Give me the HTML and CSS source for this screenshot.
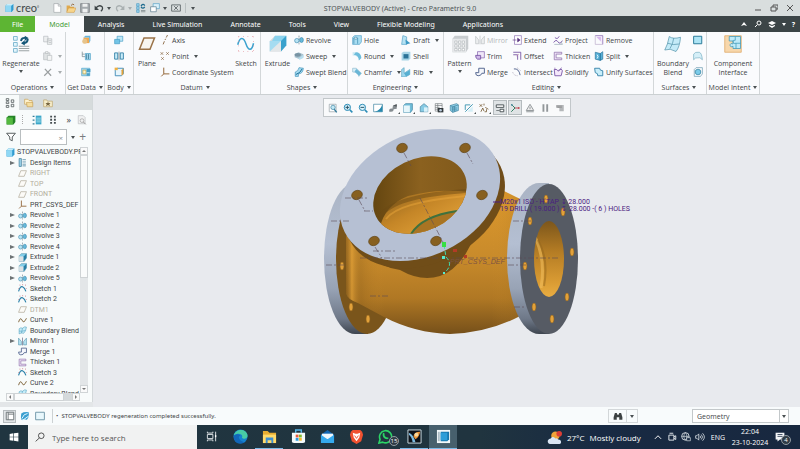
FILE: index.html
```html
<!DOCTYPE html>
<html lang="en">
<head>
  <meta charset="UTF-8">
  <title>STOPVALVEBODY (Active) - Creo Parametric 9.0</title>
  <link rel="stylesheet" href="styles.css">
</head>
<body>
  <!-- icon set -->
  <svg class="sprite" aria-hidden="true">
    <symbol id="cube" viewBox="0 0 16 16"><path d="M1 4l3-3h11v10l-3 4H1z" fill="#2f9bd0"/><path d="M1 4h10v11H1z" fill="#8fd8f5"/><path d="M4 1h11l-4 3H1z" fill="#c9eefb"/></symbol>
    <symbol id="new" viewBox="0 0 16 16"><path d="M3 1h7l4 4v10H3z" fill="#fff" stroke="#9a9fa2"/><path d="M10 1v4h4" fill="none" stroke="#9a9fa2"/></symbol>
    <symbol id="open" viewBox="0 0 16 16"><path d="M1 14V4h5l1 2h6v8z" fill="#e0a94e"/><path d="M1 15l3-7h12l-3 7z" fill="#f7d58c" stroke="#c68b35" stroke-width=".7"/><path d="M8 4q3-4 5-1" fill="none" stroke="#8a5a2b" stroke-width="1.4"/></symbol>
    <symbol id="save" viewBox="0 0 16 16"><path d="M1 1h14v14H1z" fill="#a5abae" stroke="#6b7073"/><path d="M4 1h8v5H4zM4 9h8v6H4z" fill="#eef0f0"/></symbol>
    <symbol id="undo" viewBox="0 0 16 16"><path d="M3 8q5-6 10-2 2 4-2 7" fill="none" stroke="#3d4446" stroke-width="2"/><path d="M1 4v7h7z" fill="#3d4446"/></symbol>
    <symbol id="redo" viewBox="0 0 16 16"><path d="M13 8Q8 2 3 6q-2 4 2 7" fill="none" stroke="#a9b0b1" stroke-width="2"/><path d="M15 4v7H8z" fill="#a9b0b1"/></symbol>
    <symbol id="regenlist" viewBox="0 0 16 16"><path d="M1 1h4v4H1zM1 6h4v4H1zM1 11h4v4H1z" fill="#9bd3ec" stroke="#4b9cc3"/><path d="M8 12h7M8 14h7" stroke="#697376"/><path d="M8 5q3-5 6-1M14 6q-3 4-6 0" fill="none" stroke="#1f6b8e" stroke-width="2"/></symbol>
    <symbol id="windows" viewBox="0 0 16 16"><path d="M5 1h10v8H5z" fill="#d9f0fa" stroke="#4b9cc3"/><path d="M1 6h9v8H1z" fill="#fff" stroke="#4b6f82"/></symbol>
    <symbol id="close-win" viewBox="0 0 16 16"><path d="M1 3h14v10H1zM5 5l6 6M11 5l-6 6" fill="none" stroke="#5d6567" stroke-width="1.4"/></symbol>
    <symbol id="regen" viewBox="0 0 24 24"><path d="M2 2h5v5H2zM2 10h5v5H2zM2 18h5v5H2z" fill="#e4f5fc" stroke="#62a7c6"/><path d="M9 18h14M9 21h14M9 15h14" stroke="#8f989a" stroke-width="1.2"/><path d="M12 8q1-5 6-4M21 5q0 5-5 6" fill="none" stroke="#155777" stroke-width="2.6"/><path d="M17 1l5 3-5 4zM17 7l-5 4 5 3z" fill="#155777"/></symbol>
    <symbol id="copy" viewBox="0 0 16 16"><path d="M1 2h7v9H1zM7 6h7v9H7z" fill="#eceeef" stroke="#b4b9bb"/><path d="M9 9h4M9 12h4" stroke="#b4b9bb"/></symbol>
    <symbol id="paste" viewBox="0 0 16 16"><path d="M1 3h10v11H1z" fill="#dfe2e3" stroke="#b4b9bb"/><path d="M4 1h4v3H4zM7 7h7v8H7z" fill="#f4f5f5" stroke="#b4b9bb"/></symbol>
    <symbol id="delete" viewBox="0 0 16 16"><path d="M3 3l10 11M13 3L2 14" stroke="#9b9fa1" stroke-width="2"/></symbol>
    <symbol id="udf" viewBox="0 0 16 16"><path d="M4 4h9v9H4z" fill="#f0a850"/><path d="M4 4l3-3h8v8l-2 4V4z" fill="#6bb6dc"/><circle cx="6" cy="10" r="4" fill="#e7c48b"/></symbol>
    <symbol id="copygeom" viewBox="0 0 16 16"><path d="M2 1v8h5M2 5h4" fill="none" stroke="#64757c"/><path d="M7 4h8v10H7z" fill="#a8dcf2" stroke="#3c97c0"/><path d="M9 5v8M12 5v8" stroke="#235c79"/></symbol>
    <symbol id="merge-in" viewBox="0 0 16 16"><path d="M1 2h13v12H1z" fill="#a4daf0" stroke="#4ba0c6"/><path d="M3 5h5v6H3z" fill="#fff3c5" stroke="#b99b40"/><path d="M9 3h6v5H9zM9 10h5v4H9z" fill="#4ba0c6"/></symbol>
    <symbol id="body-bool" viewBox="0 0 16 16"><path d="M5 2h9v8H5z" fill="#bde7f7" stroke="#3c97c0"/><path d="M1 7h8v7H1z" fill="#73c4e6" stroke="#3c97c0"/></symbol>
    <symbol id="body-split" viewBox="0 0 16 16"><path d="M1 3h5v10H1zM10 3h5v10h-5z" fill="#c8ecf9" stroke="#2e7ea5" stroke-width="1.4"/><path d="M8 1v14" stroke="#64757c"/></symbol>
    <symbol id="body-new" viewBox="0 0 16 16"><path d="M2 5l3-3h10v9l-3 3H2z" fill="#e8f5fb" stroke="#3786b4" stroke-width="1.4"/><path d="M12 5v9l3-3V2z" fill="#e2a23a"/><path d="M1 1h5v4H1z" fill="#f0b040"/></symbol>
    <symbol id="plane" viewBox="0 0 24 24"><path d="M8 4h14l-6 15H2z" fill="#f8f6f1" stroke="#9a7349" stroke-width="2"/></symbol>
    <symbol id="axis" viewBox="0 0 16 16"><path d="M5 15l2-5M8 8l1-2M10 4l2-4" stroke="#8b6a45" stroke-width="1.5"/></symbol>
    <symbol id="point" viewBox="0 0 16 16"><path d="M1 2l4 4M5 2L1 6M10 2l4 4M14 2l-4 4M2 10l4 4M6 10l-4 4" stroke="#8b6a45" stroke-width="1.2"/></symbol>
    <symbol id="csys" viewBox="0 0 16 16"><path d="M6 1v10h9M6 11l-4 4" fill="none" stroke="#94683b" stroke-width="1.6"/></symbol>
    <symbol id="sketch" viewBox="0 0 24 24"><path d="M1 13C4 1 9 3 12 12s8 10 10-1" fill="none" stroke="#3ba2cf" stroke-width="2"/><path d="M2 2h20M2 22h20M2 2v20M22 2v20" fill="none" stroke="#e08d95" stroke-dasharray="1 5"/></symbol>
    <symbol id="extrude" viewBox="0 0 24 24"><path d="M1 8l7-7h15v13l-7 8H1z" fill="#d5dadd"/><path d="M8 1h15v13l-7-5V8H4z" fill="#8bd3ee"/><path d="M16 8l7-7v13l-7 8z" fill="#3aa2cd"/><path d="M1 8h15v14H1z" fill="#e3e7e9"/><path d="M1 8h15L1 22z" fill="#a5dcf1"/></symbol>
    <symbol id="revolve" viewBox="0 0 16 16"><path d="M8 1v14" stroke="#59707b" stroke-dasharray="3 1"/><ellipse cx="4.500" cy="9" rx="3.500" ry="3.500" fill="#b8e3f3" stroke="#3687ad"/><ellipse cx="12" cy="8" rx="3" ry="4" fill="#67b9da" stroke="#3687ad"/></symbol>
    <symbol id="sweep" viewBox="0 0 16 16"><path d="M1 5l6-3 8 3v5l-6 3-8-3z" fill="#a9c3d0"/><ellipse cx="6" cy="6" rx="5" ry="3" fill="#7893a3"/><path d="M7 12l8-6v5l-6 3z" fill="#b7dfef"/></symbol>
    <symbol id="swept" viewBox="0 0 16 16"><path d="M2 15V8q5-1 6-7l7 1q-1 9-8 9v4z" fill="#a6dcf2" stroke="#358bb3"/><path d="M3 12q7-2 10-9" fill="none" stroke="#1d6f98" stroke-width="1.600"/></symbol>
    <symbol id="hole" viewBox="0 0 16 16"><path d="M1 4l3-3h11v10l-3 4H1z" fill="#a9ddf1" stroke="#4b9cc3"/><ellipse cx="6" cy="5" rx="3" ry="1.500" fill="#fff" stroke="#2e7ea5"/><path d="M3 5v9M9 5v9" stroke="#2e7ea5"/></symbol>
    <symbol id="round" viewBox="0 0 16 16"><path d="M1 2h6q7 1 8 8l-4 5q0-8-10-8z" fill="#c9e9f4"/><path d="M6 2q8 0 9 9l-4 4q0-8-8-9z" fill="#6dbcdb"/></symbol>
    <symbol id="chamfer" viewBox="0 0 16 16"><path d="M1 2h6l8 8-4 5q-1-7-10-7z" fill="#d5eef8" stroke="#8bb9cc"/><path d="M7 3l8 7-4 4-7-7z" fill="#6ab6d6"/></symbol>
    <symbol id="draft" viewBox="0 0 16 16"><path d="M3 1l6 2v12H1z" fill="#b6e2f3" stroke="#4b9cc3"/><path d="M7 7l8 6-7 2z" fill="#3d99c4"/></symbol>
    <symbol id="shell" viewBox="0 0 16 16"><path d="M1 3l3-2h11v11l-3 3H1z" fill="#a8d5e6"/><path d="M4 5h8v7H4z" fill="#2a7398"/></symbol>
    <symbol id="rib" viewBox="0 0 16 16"><path d="M1 4l4-3v9l9-6v8l-7 4H1z" fill="#9fd7ed" stroke="#559fbc"/><path d="M5 10l9-5v7l-6 3z" fill="#56afd2"/></symbol>
    <symbol id="pattern" viewBox="0 0 24 24"><path d="M2 5l3-4h18v17l-3 5H2z" fill="#c8cccf"/><path d="M2 5h18v18H2z" fill="#e6e8ea"/><path d="M5 8h3v3H5zM10 8h3v3h-3zM15 8h3v3h-3zM5 13h3v3H5zM10 13h3v3h-3zM15 13h3v3h-3zM5 18h3v3H5zM10 18h3v3h-3zM15 18h3v3h-3z" fill="#fff" stroke="#a5abae" stroke-width=".7"/></symbol>
    <symbol id="mirror-off" viewBox="0 0 16 16"><path d="M1 2v12h5V8zM15 2v12h-5V8zM8 1v14" fill="#eceeef" stroke="#b9bdbf"/></symbol>
    <symbol id="trim" viewBox="0 0 16 16"><path d="M4 1h11v10H4z" fill="#efe6f8" stroke="#7652a3"/><path d="M1 7h8v6H4q-3-1-3-6z" fill="#cfb8e8" stroke="#7652a3" stroke-width="1.400"/></symbol>
    <symbol id="merge" viewBox="0 0 16 16"><path d="M6 2h9v8h-4q-1 4-6 4-4 0-4-5h5z" fill="#f4f6fb" stroke="#50628d" stroke-width="1.500"/></symbol>
    <symbol id="extend" viewBox="0 0 16 16"><path d="M4 1h11v14H4z" fill="#fff" stroke="#8767ae"/><path d="M1 8h6M9 5v6l4-3z" fill="#58337f" stroke="#58337f"/></symbol>
    <symbol id="offset" viewBox="0 0 16 16"><path d="M2 2h12v12M2 6h7v8" fill="none" stroke="#7652a3" stroke-width="1.400"/><path d="M11 5l-4 3" stroke="#c58aa0"/></symbol>
    <symbol id="intersect" viewBox="0 0 16 16"><path d="M3 3q8-1 10 10" fill="none" stroke="#50628d" stroke-width="1.500"/><path d="M1 8q2 6 8 6M8 1l6 5" fill="none" stroke="#a7a0b4" stroke-dasharray="2 1"/></symbol>
    <symbol id="project" viewBox="0 0 16 16"><path d="M3 4q4 4 7-2M1 12q4-6 7-1t7-2" fill="none" stroke="#7652a3" stroke-width="1.400"/><path d="M2 15h13l-2-4" fill="none" stroke="#8ba0ad"/></symbol>
    <symbol id="thicken" viewBox="0 0 16 16"><path d="M2 2h12v3H5v6h9v3H2z" fill="#eee3f6" stroke="#7e5d9e"/></symbol>
    <symbol id="solidify" viewBox="0 0 16 16"><path d="M2 4h4q2 5 7-1l2 3-2 8H3z" fill="#f5e9fb" stroke="#7652a3" stroke-width="1.400"/><path d="M8 6l6-5M3 1v3" stroke="#7652a3"/></symbol>
    <symbol id="remove" viewBox="0 0 16 16"><path d="M2 1h12v14" fill="#f4ecfa" stroke="#7652a3"/><path d="M4 3h7v7z" fill="#d6b5ed"/><path d="M2 1v14h12" fill="none" stroke="#b6a5c5"/></symbol>
    <symbol id="split" viewBox="0 0 16 16"><path d="M2 2l8 2v11l-8-2zM10 4l4-3v12l-4 2z" fill="#57b0d7" stroke="#236f97"/><path d="M5 6q3 3 0 6" fill="none" stroke="#eafaff" stroke-width="1.500"/></symbol>
    <symbol id="unify" viewBox="0 0 16 16"><path d="M1 2h8q0 4 5 4v8H6q1-4-4-5z" fill="#c9eefa" stroke="#2e7ea5" stroke-width="1.400"/></symbol>
    <symbol id="boundary" viewBox="0 0 24 24"><path d="M7 2q5 4 15 1-1 13-6 19Q8 17 1 20 5 13 7 2z" fill="#c4ebf8" stroke="#5897ae"/><path d="M13 4q-1 8-5 14M5 11q7 3 15 1" fill="none" stroke="#5897ae"/></symbol>
    <symbol id="fill" viewBox="0 0 16 16"><path d="M1 2h13v12H1z" fill="#ade4f5" stroke="#237594" stroke-width="1.500"/></symbol>
    <symbol id="style" viewBox="0 0 16 16"><path d="M1 14V5q2-4 9-3 4 1 5 12-4-5-8-3-3-1-6 3z" fill="#d5eff8" stroke="#6ba6bb"/></symbol>
    <symbol id="freestyle" viewBox="0 0 16 16"><path d="M2 4l3-3h10v10l-3 4H2z" fill="none" stroke="#5b91a7"/><circle cx="8" cy="8" r="4.500" fill="#7bcbe9" stroke="#237594"/></symbol>
    <symbol id="component" viewBox="0 0 24 24"><path d="M1 1h22v22H1z" fill="#f7d7ac" stroke="#dda662"/><path d="M7 2h15v16H12v-3q-4 2-4-2 1-3 4-1V8H7z" fill="#bfeaf8" stroke="#3e98b8"/><path d="M15 2v5q-4-1-3 3 1 2 4 1v7M16 11h6" fill="none" stroke="#3e98b8"/></symbol>
    <symbol id="treetab" viewBox="0 0 16 16"><path d="M2 1h4v3H2zM2 6h4v3H2zM2 12h4v3H2zM10 3h4v4h-4zM10 10h4v4h-4z" fill="none" stroke="#555c5e" stroke-width="1.300"/></symbol>
    <symbol id="folders" viewBox="0 0 16 16"><path d="M1 2h5l2 2h5v6H1z" fill="#fff4cf" stroke="#c59a4c"/><path d="M4 7h10v7H5z" fill="#f4dd9f" stroke="#c59a4c"/></symbol>
    <symbol id="favorite" viewBox="0 0 16 16"><path d="M1 3h5l1 2h8v9H1z" fill="#f6ecc8" stroke="#ba9f63"/><path d="M8 6l1 2h3l-2 2 1 3-3-2-3 2 1-3-2-2h3z" fill="#776540"/></symbol>
    <symbol id="greencube" viewBox="0 0 16 16"><path d="M1 4l3-3h11v10l-3 4H1z" fill="#238326"/><path d="M1 4h10v11H1z" fill="#54b93f"/></symbol>
    <symbol id="listset" viewBox="0 0 16 16"><path d="M1 2h3M1 8h3M1 14h3" stroke="#347c96" stroke-width="2"/><path d="M6 1h9v14H6z" fill="#3aa6c8"/><path d="M7 5h7M7 8h7M7 11h7" stroke="#dff"/></symbol>
    <symbol id="listdots" viewBox="0 0 16 16"><path d="M5 1v14M11 1v14" stroke="#454d50" stroke-width="3" stroke-dasharray="3 2"/></symbol>
    <symbol id="findpage" viewBox="0 0 16 16"><path d="M2 1h8l3 3v10H2z" fill="#f0f1f1" stroke="#b5b9bb"/><circle cx="8" cy="9" r="3" fill="none" stroke="#999"/><path d="M10 11l4 4" stroke="#999" stroke-width="1.500"/></symbol>
    <symbol id="filter" viewBox="0 0 16 16"><path d="M1 2h14l-5 6v6l-4-2V8z" fill="#fff" stroke="#4e5557" stroke-width="1.500"/></symbol>
    <symbol id="items" viewBox="0 0 16 16"><path d="M2 1h4v14H2zM8 3h6M8 7h6M8 11h6M8 14h6" fill="#9fd5ec" stroke="#407e99" stroke-width="1.300"/></symbol>
    <symbol id="datum" viewBox="0 0 16 16"><path d="M5 3h10l-4 10H1z" fill="#fcfbf7" stroke="#bdb7a8" stroke-width="1.500"/></symbol>
    <symbol id="extr" viewBox="0 0 16 16"><path d="M2 5l4-4h9v8l-4 6H2z" fill="#82cee9" stroke="#6d9dae"/><path d="M2 6h8v9H2z" fill="#dce2e5"/><path d="M10 6l5-5v8l-5 6z" fill="#277da4"/></symbol>
    <symbol id="sk" viewBox="0 0 16 16"><path d="M1 13Q4 3 8 5t6 8" fill="none" stroke="#287fa8" stroke-width="2"/><path d="M3 2h1M8 1h1M13 2h1M1 8h1M14 8h1" stroke="#c26972" stroke-width="2"/></symbol>
    <symbol id="curve" viewBox="0 0 16 16"><path d="M1 11Q4 1 7 7q3 8 8-3" fill="none" stroke="#80663d" stroke-width="1.700"/></symbol>
    <symbol id="bblend" viewBox="0 0 16 16"><path d="M2 5q3-3 6-1 4-4 7-2-1 8-5 11-4-2-8 1z" fill="#c7edf9" stroke="#4d9dbd"/><path d="M8 4L6 13M2 9q5 1 11-1" fill="none" stroke="#4d9dbd"/></symbol>
    <symbol id="mirror" viewBox="0 0 16 16"><path d="M1 2v12h5V8zM15 2v12h-5V8z" fill="#b7e2f2" stroke="#4b8ea9"/><path d="M8 1v14" stroke="#446"/></symbol>
    <symbol id="zoomfit" viewBox="0 0 16 16"><path d="M2 2h11v12H2z" fill="#fff" stroke="#8a979d"/><circle cx="8" cy="7" r="3.500" fill="#c2e8f5" stroke="#2d7899"/><path d="M10 10l4 5" stroke="#2d7899" stroke-width="2"/></symbol>
    <symbol id="zoomin" viewBox="0 0 16 16"><circle cx="7" cy="7" r="5" fill="#d8f2fb" stroke="#2d8db7" stroke-width="1.600"/><path d="M4 7h6M7 4v6" stroke="#214d63" stroke-width="1.500"/><path d="M11 11l4 4" stroke="#2d8db7" stroke-width="2.400"/></symbol>
    <symbol id="zoomout" viewBox="0 0 16 16"><circle cx="7" cy="7" r="5" fill="#d8f2fb" stroke="#2d8db7" stroke-width="1.600"/><path d="M4 7h6" stroke="#214d63" stroke-width="1.500"/><path d="M11 11l4 4" stroke="#2d8db7" stroke-width="2.400"/></symbol>
    <symbol id="repaint" viewBox="0 0 16 16"><path d="M1 2h14v12H1z" fill="#fff" stroke="#277696"/><path d="M15 2v12H3q9-2 12-12z" fill="#2788ad"/></symbol>
    <symbol id="render" viewBox="0 0 16 16"><path d="M2 14q-1-6 5-5l1-5 6-2v7l-5 1q0 4-4 4z" fill="#858c90"/><path d="M8 4l6-2v4z" fill="#53595c"/></symbol>
    <symbol id="display" viewBox="0 0 16 16"><path d="M1 4l3-3h11v10l-3 4H1z" fill="#71bed9" stroke="#2d7899"/><path d="M1 4h10v11H1z" fill="#e6f6fb"/></symbol>
    <symbol id="views" viewBox="0 0 16 16"><path d="M2 6l6-5 6 5v8H2z" fill="#88cbe4" stroke="#397c99"/><path d="M8 7h6v7H8z" fill="#d9f2fa"/></symbol>
    <symbol id="viewmgr" viewBox="0 0 16 16"><path d="M2 1h11v12H2zM2 4h11M2 7h7M2 10h6M6 1v12" fill="none" stroke="#707779"/><path d="M6 8h9v7H6z" fill="#333a3d"/><circle cx="10.500" cy="11.500" r="2" fill="#bcd"/></symbol>
    <symbol id="persp" viewBox="0 0 16 16"><path d="M2 4l10-3 3 2v9l-9 3-4-3z" fill="#8fcfe8" stroke="#377b98"/><path d="M2 4l4 2v9M6 6l9-3M4 8h9M4 11h9M9 5v9" fill="none" stroke="#377b98"/></symbol>
    <symbol id="section" viewBox="0 0 16 16"><path d="M2 14L14 2M2 3h8M2 3v8" fill="none" stroke="#3f97b3" stroke-width="1.500"/><path d="M14 5v9H5z" fill="#d4eef6"/></symbol>
    <symbol id="datums" viewBox="0 0 16 16"><path d="M1 2l4 4M5 2L1 6M8 1v3M3 14l3-6 2 5M10 7l5 3M9 14h3v-4" fill="none" stroke="#7d633e" stroke-width="1.400"/></symbol>
    <symbol id="notes" viewBox="0 0 16 16"><path d="M2 3h12v4H2zM8 10h6v4H8z" fill="#fff" stroke="#3e4749" stroke-width="1.400"/><path d="M2 12h5" stroke="#3e4749"/></symbol>
    <symbol id="spin" viewBox="0 0 16 16"><path d="M2 2l6 6-6 6" fill="none" stroke="#337d61" stroke-width="1.600"/><path d="M8 8h6" stroke="#c24a54" stroke-width="1.500"/><circle cx="3" cy="3" r="1.500" fill="#4d8c9f"/><circle cx="14" cy="8" r="1.500" fill="#c24a54"/></symbol>
    <symbol id="warn" viewBox="0 0 16 16"><path d="M8 2l6 10H2z" fill="#eee" stroke="#8f9497" stroke-width="1.500"/><path d="M8 6v4M2 14h12" stroke="#8f9497" stroke-width="1.500"/></symbol>
    <symbol id="pause" viewBox="0 0 16 16"><path d="M4 2h3v12H4zM10 2h3v12h-3z" fill="#92979a"/></symbol>
    <symbol id="stop" viewBox="0 0 16 16"><path d="M2 3h12v10H7V8H2z" fill="#b4b7b9"/><path d="M2 5h9M4 7h7" stroke="#888"/></symbol>
    <symbol id="panel" viewBox="0 0 16 16"><path d="M2 2h12v12H2zM5 2v12M5 5h9" fill="#fff" stroke="#626b6f" stroke-width="1.400"/></symbol>
    <symbol id="browser" viewBox="0 0 16 16"><path d="M2 4q4-3 12-2 1 8-3 12-5-2-9 0-1-5 0-10z" fill="#3b9fd0"/><path d="M3 12Q6 4 12 4M4 15l10-7" fill="none" stroke="#dff5ff" stroke-width="1.600"/></symbol>
    <symbol id="square" viewBox="0 0 16 16"><path d="M1 2h14v12H1z" fill="#e8f7fc" stroke="#6e95a8" stroke-width="1.500"/></symbol>
    <symbol id="binoc" viewBox="0 0 16 16"><path d="M3 3h3l1 3h2l1-3h3l2 7v4h-5v-4H6v4H1v-4z" fill="#3c4142"/></symbol>
    <symbol id="win" viewBox="0 0 16 16"><path d="M1 3l6-1v5.500H1zM8 2l7-1v6.500H8zM1 8.500h6V14l-6-1zM8 8.500h7V15l-7-1z" fill="#fff"/></symbol>
    <symbol id="search" viewBox="0 0 16 16"><circle cx="10" cy="6" r="4.500" fill="none" stroke="#333" stroke-width="1.300"/><path d="M7 9.500L1 15" stroke="#333" stroke-width="1.300"/></symbol>
    <symbol id="taskview" viewBox="0 0 16 16"><path d="M2 5h8v6H2zM2 1v2h8V1M2 15v-2h8v2M14 1v14" fill="none" stroke="#e8edef" stroke-width="1.300"/><path d="M13 6h2v3h-2z" fill="#fff"/></symbol>
    <symbol id="edge" viewBox="0 0 16 16"><circle cx="8" cy="8" r="7.500" fill="#1682cf"/><path d="M1 7C2-1 15-1 15.500 7c0 4-5 4-6 2 2-3-4-6-8.500-2z" fill="#48cba5"/><path d="M1 7q4-3 7 0-3 1-1 4t6 3Q3 18 1 10z" fill="#1266b8"/></symbol>
    <symbol id="explorer" viewBox="0 0 16 16"><path d="M1 2h5l2 2h7v11H1z" fill="#e8ad32"/><path d="M1 6h14v9H1z" fill="#ffda6b"/><path d="M4 9h8v6h-2v-3H6v3H4z" fill="#3e8fd2"/></symbol>
    <symbol id="store" viewBox="0 0 16 16"><path d="M5 4V1h6v3" fill="none" stroke="#58b7e9" stroke-width="1.500"/><path d="M1 4h14v10l-2 1H3l-2-1z" fill="#f5fafc"/><path d="M5 6h3v3H5z" fill="#ef5b3a"/><path d="M8.500 6h3v3h-3z" fill="#80bb2f"/><path d="M5 9.500h3v3H5z" fill="#2b9be0"/><path d="M8.500 9.500h3v3h-3z" fill="#f8bb30"/></symbol>
    <symbol id="mail" viewBox="0 0 16 16"><path d="M1 6l7-5 7 5v8H1z" fill="#1267b3"/><path d="M2 5h12v6H2z" fill="#eef7fd"/><path d="M1 6l7 5 7-5v9H1z" fill="#35a9ed"/></symbol>
    <symbol id="brave" viewBox="0 0 16 16"><path d="M4 1h8l2 2 1 3-2 7-5 3-5-3-2-7 1-3z" fill="#f05130"/><path d="M4 4l3 1h2l3-1-1 5-3 4-3-4z" fill="#fff"/><path d="M6 7l2 3 2-3" fill="none" stroke="#f05130"/></symbol>
    <symbol id="whatsapp" viewBox="0 0 16 16"><path d="M1 15l1.200-4A6.500 6.500 0 1 1 5 14z" fill="none" stroke="#2bd366" stroke-width="1.700"/><path d="M5 5q1-2 2 0l0 2q1 2 3 2l1 0q1 1-1 2-4 0-5-4z" fill="#2bd366"/></symbol>
    <symbol id="creo-app" viewBox="0 0 16 16"><path d="M1 1h14v14H1z" fill="#0d1219" stroke="#cfe0e6"/><path d="M2 4q5 2 7 10H6Q5 8 2 6z" fill="#7dbbe0"/><path d="M7 8q0-5 7-5-1 6-5 8z" fill="#ef963a"/><circle cx="10" cy="6" r="2" fill="#f6d9a0"/></symbol>
    <symbol id="creo-part" viewBox="0 0 16 16"><path d="M1 1h14v14H1z" fill="#f3f8fa"/><path d="M5 3h9v8l-2 2H5z" fill="#1778af"/><path d="M5 4h7v8H5z" fill="#2c9dd8"/><path d="M2 3h2v10H2z" fill="#aebec6"/></symbol>
    <symbol id="weather" viewBox="0 0 16 16"><circle cx="9" cy="6" r="4.500" fill="#f2a338"/><path d="M3 15q-3-1-2-4 1-2 3-2 2-3 5 0 1-1 3 1 3 0 3 3 0 2-3 2z" fill="#d9e5f3"/><circle cx="13" cy="4" r="3" fill="#dc3e35"/></symbol>
    <symbol id="meet" viewBox="0 0 16 16"><path d="M3 5h8v8H3zM11 8l3-2v6l-3-2M4 2h6" fill="none" stroke="#e6ebef" stroke-width="1.500"/></symbol>
    <symbol id="globe" viewBox="0 0 16 16"><circle cx="7" cy="7" r="6" fill="none" stroke="#e6ebef" stroke-width="1.300"/><path d="M1 7h12M7 1q-5 6 0 12M7 1q5 6 0 12" fill="none" stroke="#e6ebef"/><path d="M9 9h6v5H9z" fill="#1a2b43" stroke="#e6ebef"/></symbol>
    <symbol id="sound" viewBox="0 0 16 16"><path d="M1 6h2l3-3v10l-3-3H1zM8 6q2 2 0 4M10 4q4 4 0 8M12 2q6 6 0 12" fill="none" stroke="#e6ebef" stroke-width="1.200"/></symbol>
    <symbol id="notice" viewBox="0 0 16 16"><path d="M1 1h14v11H8l-4 3v-3H1z" fill="#f3f5f7"/><path d="M4 4h8M4 7h8" stroke="#25364d" stroke-width="1.300"/></symbol>
  </svg>

  <div class="app">
    <header class="titlebar">
      <div class="quick">
        <svg class="logo"><use href="#cube"/></svg><span class="brand">creo<sup>°</sup></span>
        <button aria-label="New"><svg><use href="#new"/></svg></button>
        <button aria-label="Open"><svg><use href="#open"/></svg></button>
        <button aria-label="Save"><svg><use href="#save"/></svg></button>
        <button aria-label="Undo"><svg><use href="#undo"/></svg><i class="caret"></i></button>
        <button aria-label="Redo"><svg><use href="#redo"/></svg><i class="caret dim"></i></button>
        <button aria-label="Regenerate"><svg><use href="#regenlist"/></svg></button>
        <button aria-label="Windows"><svg><use href="#windows"/></svg><i class="caret"></i></button>
        <button aria-label="Close"><svg><use href="#close-win"/></svg></button>
        <button class="more" aria-label="Customize"><i class="caret"></i></button>
      </div>
      <div class="doc-title">STOPVALVEBODY (Active) - Creo Parametric 9.0</div>
      <div class="win-buttons">
        <button aria-label="Minimize"><svg viewBox="0 0 8 8"><path d="M1 6h6" stroke="#555" stroke-width="1"/></svg></button>
        <button aria-label="Restore"><svg viewBox="0 0 8 8"><path d="M1 3h5v4H1zM3 3V1h5v4H6" fill="none" stroke="#555"/></svg></button>
        <button aria-label="Close window"><svg viewBox="0 0 8 8"><path d="M1 1l6 6M7 1L1 7" stroke="#555"/></svg></button>
      </div>
    </header>

    <nav class="tabs">
      <a href="#" class="file">File</a>
      <a href="#" class="active">Model</a>
      <a href="#">Analysis</a>
      <a href="#">Live Simulation</a>
      <a href="#">Annotate</a>
      <a href="#">Tools</a>
      <a href="#">View</a>
      <a href="#">Flexible Modeling</a>
      <a href="#">Applications</a>
      <div class="tab-tools">
        <button aria-label="Collapse ribbon"><svg viewBox="0 0 8 8"><path d="M1 6l3-4 3 4-3-1z" fill="#fff"/></svg></button>
        <button aria-label="Search commands"><svg viewBox="0 0 8 8"><circle cx="5" cy="3" r="2" fill="none" stroke="#fff"/><path d="M3 5L1 7" stroke="#fff"/></svg></button>
        <button aria-label="Learning"><svg viewBox="0 0 8 8"><path d="M0 3l4-2 4 2-4 2zM1 5l3 1 3-1v1L4 8 1 6z" fill="#fff"/></svg></button>
        <button aria-label="Help menu"><i class="caret light"></i></button>
        <button>?</button>
      </div>
    </nav>

    <section class="ribbon">
      <div class="group g-ops">
        <div class="tools">
          <button class="big"><svg><use href="#regen"/></svg><span>Regenerate</span><i class="caret"></i></button>
          <div class="col">
            <button aria-label="Copy"><svg><use href="#copy"/></svg></button>
            <button aria-label="Paste"><svg><use href="#paste"/></svg><i class="caret dim"></i></button>
            <button aria-label="Delete"><svg><use href="#delete"/></svg><i class="caret dim"></i></button>
          </div>
        </div>
        <button class="group-name">Operations<i class="caret"></i></button>
      </div>
      <div class="group g-data">
        <div class="tools">
          <div class="col">
            <button aria-label="User-defined feature"><svg><use href="#udf"/></svg></button>
            <button aria-label="Copy geometry"><svg><use href="#copygeom"/></svg></button>
            <button aria-label="Merge/Inheritance"><svg><use href="#merge-in"/></svg></button>
          </div>
        </div>
        <button class="group-name">Get Data<i class="caret"></i></button>
      </div>
      <div class="group g-body">
        <div class="tools">
          <div class="col">
            <button aria-label="Boolean operations"><svg><use href="#body-bool"/></svg></button>
            <button aria-label="Split body"><svg><use href="#body-split"/></svg></button>
            <button aria-label="New body"><svg><use href="#body-new"/></svg></button>
          </div>
        </div>
        <button class="group-name">Body<i class="caret"></i></button>
      </div>
      <div class="group g-datum">
        <div class="tools">
          <button class="big"><svg><use href="#plane"/></svg><span>Plane</span></button>
          <div class="col">
            <button><svg><use href="#axis"/></svg>Axis</button>
            <button><svg><use href="#point"/></svg>Point<i class="caret"></i></button>
            <button><svg><use href="#csys"/></svg>Coordinate System</button>
          </div>
          <button class="big"><svg><use href="#sketch"/></svg><span>Sketch</span></button>
        </div>
        <button class="group-name">Datum<i class="caret"></i></button>
      </div>
      <div class="group g-shapes">
        <div class="tools">
          <button class="big"><svg><use href="#extrude"/></svg><span>Extrude</span></button>
          <div class="col">
            <button><svg><use href="#revolve"/></svg>Revolve</button>
            <button><svg><use href="#sweep"/></svg>Sweep<i class="caret"></i></button>
            <button><svg><use href="#swept"/></svg>Swept Blend</button>
          </div>
        </div>
        <button class="group-name">Shapes<i class="caret"></i></button>
      </div>
      <div class="group g-eng">
        <div class="tools">
          <div class="col">
            <button><svg><use href="#hole"/></svg>Hole</button>
            <button><svg><use href="#round"/></svg>Round<i class="caret"></i></button>
            <button><svg><use href="#chamfer"/></svg>Chamfer<i class="caret"></i></button>
          </div>
          <div class="col">
            <button><svg><use href="#draft"/></svg>Draft<i class="caret"></i></button>
            <button><svg><use href="#shell"/></svg>Shell</button>
            <button><svg><use href="#rib"/></svg>Rib<i class="caret"></i></button>
          </div>
        </div>
        <button class="group-name">Engineering<i class="caret"></i></button>
      </div>
      <div class="group g-edit">
        <div class="tools">
          <button class="big"><svg><use href="#pattern"/></svg><span>Pattern</span><i class="caret"></i></button>
          <div class="col">
            <button disabled><svg><use href="#mirror-off"/></svg>Mirror</button>
            <button><svg><use href="#trim"/></svg>Trim</button>
            <button><svg><use href="#merge"/></svg>Merge</button>
          </div>
          <div class="col">
            <button><svg><use href="#extend"/></svg>Extend</button>
            <button><svg><use href="#offset"/></svg>Offset</button>
            <button><svg><use href="#intersect"/></svg>Intersect</button>
          </div>
          <div class="col">
            <button><svg><use href="#project"/></svg>Project</button>
            <button><svg><use href="#thicken"/></svg>Thicken</button>
            <button><svg><use href="#solidify"/></svg>Solidify</button>
          </div>
          <div class="col">
            <button><svg><use href="#remove"/></svg>Remove</button>
            <button><svg><use href="#split"/></svg>Split<i class="caret"></i></button>
            <button><svg><use href="#unify"/></svg>Unify Surfaces</button>
          </div>
        </div>
        <button class="group-name">Editing<i class="caret"></i></button>
      </div>
      <div class="group g-surf">
        <div class="tools">
          <button class="big"><svg><use href="#boundary"/></svg><span>Boundary<br>Blend</span></button>
          <div class="col">
            <button aria-label="Fill"><svg><use href="#fill"/></svg></button>
            <button aria-label="Style"><svg><use href="#style"/></svg></button>
            <button aria-label="Freestyle"><svg><use href="#freestyle"/></svg></button>
          </div>
        </div>
        <button class="group-name">Surfaces<i class="caret"></i></button>
      </div>
      <div class="group g-intent">
        <div class="tools">
          <button class="big"><svg><use href="#component"/></svg><span>Component<br>Interface</span></button>
        </div>
        <button class="group-name">Model Intent<i class="caret"></i></button>
      </div>
    </section>

    <main class="work">
      <aside class="side">
        <div class="side-tabs">
          <button class="on" aria-label="Model tree"><svg><use href="#treetab"/></svg></button>
          <button aria-label="Folder browser"><svg><use href="#folders"/></svg></button>
          <button aria-label="Favorites"><svg><use href="#favorite"/></svg></button>
        </div>
        <div class="side-tools">
          <button aria-label="Model"><svg><use href="#greencube"/></svg></button>
          <i class="grip"></i>
          <button aria-label="Settings"><svg><use href="#listset"/></svg></button>
          <button aria-label="Show"><svg><use href="#listdots"/></svg></button>
          <button class="push">»</button>
          <button aria-label="Find in tree"><svg><use href="#findpage"/></svg></button>
        </div>
        <div class="side-filter">
          <svg><use href="#filter"/></svg>
          <div class="filter-box"><input type="text" aria-label="Filter tree"><button aria-label="Clear">×</button></div>
          <i class="caret"></i>
          <button class="plus" aria-label="Add column">+</button>
        </div>
        <div class="tree-wrap">
          <ul class="tree">
            <li class="root"><svg><use href="#cube"/></svg>STOPVALVEBODY.PRT</li>
            <li class="more"><svg><use href="#items"/></svg>Design Items</li>
            <li class="hid"><svg><use href="#datum"/></svg>RIGHT</li>
            <li class="hid"><svg><use href="#datum"/></svg>TOP</li>
            <li class="hid"><svg><use href="#datum"/></svg>FRONT</li>
            <li><svg><use href="#csys"/></svg>PRT_CSYS_DEF</li>
            <li class="more"><svg><use href="#revolve"/></svg>Revolve 1</li>
            <li class="more"><svg><use href="#revolve"/></svg>Revolve 2</li>
            <li class="more"><svg><use href="#revolve"/></svg>Revolve 3</li>
            <li class="more"><svg><use href="#revolve"/></svg>Revolve 4</li>
            <li class="more"><svg><use href="#extr"/></svg>Extrude 1</li>
            <li class="more"><svg><use href="#extr"/></svg>Extrude 2</li>
            <li class="more"><svg><use href="#revolve"/></svg>Revolve 5</li>
            <li><svg><use href="#sk"/></svg>Sketch 1</li>
            <li><svg><use href="#sk"/></svg>Sketch 2</li>
            <li class="hid"><svg><use href="#datum"/></svg>DTM1</li>
            <li><svg><use href="#curve"/></svg>Curve 1</li>
            <li><svg><use href="#bblend"/></svg>Boundary Blend</li>
            <li class="more"><svg><use href="#mirror"/></svg>Mirror 1</li>
            <li><svg><use href="#merge"/></svg>Merge 1</li>
            <li><svg><use href="#thicken"/></svg>Thicken 1</li>
            <li><svg><use href="#sk"/></svg>Sketch 3</li>
            <li><svg><use href="#curve"/></svg>Curve 2</li>
            <li><svg><use href="#bblend"/></svg>Boundary Blend</li>
          </ul>
          <div class="vbar"><i class="up"></i><b></b><i class="down"></i></div>
        </div>
        <div class="hbar"><i class="left"></i><b></b><i class="right"></i></div>
      </aside>

      <section class="canvas">
        <svg class="model" viewBox="93 95 707 312" preserveAspectRatio="xMidYMin meet">
          <defs>
            <linearGradient id="steel" x1="0" y1="0" x2="0" y2="1"><stop offset="0" stop-color="#aab4c4"/><stop offset=".4" stop-color="#b4bfd2"/><stop offset=".7" stop-color="#98a3b5"/><stop offset=".9" stop-color="#6e7888"/><stop offset="1" stop-color="#3f4650"/></linearGradient>
            <linearGradient id="gold" x1="0" y1="0" x2="0" y2="1"><stop offset="0" stop-color="#dc982c"/><stop offset=".45" stop-color="#c98b2b"/><stop offset=".75" stop-color="#b07824"/><stop offset="1" stop-color="#76501a"/></linearGradient>
            <linearGradient id="goldside" x1="0" y1="0" x2="1" y2="0"><stop offset="0" stop-color="#4f3510" stop-opacity=".4"/><stop offset=".03" stop-color="#e6a53a" stop-opacity=".6"/><stop offset=".08" stop-color="#7a5318" stop-opacity=".2"/><stop offset=".2" stop-color="#d6952e" stop-opacity="0"/><stop offset=".75" stop-color="#d6952e" stop-opacity="0"/><stop offset="1" stop-color="#6b4812" stop-opacity=".4"/></linearGradient>
            <linearGradient id="bore" x1="0" y1="0" x2="1" y2="0"><stop offset="0" stop-color="#62440f"/><stop offset=".5" stop-color="#8b611f"/><stop offset="1" stop-color="#80591b"/></linearGradient>
            <linearGradient id="floor" x1="0" y1="0" x2="1" y2="1"><stop offset="0" stop-color="#8a601d"/><stop offset=".4" stop-color="#c58627"/><stop offset=".7" stop-color="#dc9c35"/><stop offset="1" stop-color="#b37a20"/></linearGradient>
            <linearGradient id="port" x1="0" y1="0" x2="0" y2="1"><stop offset="0" stop-color="#7c561b"/><stop offset=".4" stop-color="#b47c24"/><stop offset=".8" stop-color="#d99b33"/><stop offset="1" stop-color="#e9ad42"/></linearGradient>
            <clipPath id="boreclip"><ellipse cx="420" cy="195" rx="49" ry="36" transform="rotate(-26 420 195)"/></clipPath>
            <clipPath id="portclip"><ellipse cx="549" cy="259" rx="15" ry="38"/></clipPath>
          </defs>

          <!-- left flange -->
          <path d="M355 183a31 75.500 0 0 0 0 151h13V183z" fill="url(#steel)"/>
          <ellipse cx="367" cy="259" rx="31" ry="75" fill="#7a551b"/>

          <!-- body -->
          <path d="M346 236V293Q347 299 358 303L384 317Q415 333 450 334 488 333 520 316L540 208 516 197 504 191 440 200z" fill="url(#gold)"/>
          <path d="M346 236V293Q347 299 358 303L384 317Q415 333 450 334 488 333 520 316L540 208 516 197 504 191 440 200z" fill="url(#goldside)"/>
          <!-- neck -->
          <path d="M363 249Q380 268 400 270 421 282 440 276 453 272 465 255 474 237 488 222L500 200 440 220z" fill="#704d18"/>

          <!-- top flange -->
          <ellipse cx="425" cy="203" rx="84" ry="60" transform="rotate(-26 425 203)" fill="#704d18"/>
          <ellipse cx="420" cy="195" rx="84" ry="61" transform="rotate(-26 420 195)" fill="#b6c0d3"/>
          <g clip-path="url(#boreclip)">
            <path d="M370 150h100v90H370z" fill="url(#bore)"/>
            <path d="M380 228Q384 206 408 196 440 188 470 192V240H380z" fill="url(#floor)"/>
            <path d="M380 217Q392 196 466 191" fill="none" stroke="#6c4913" stroke-width="4" opacity=".5"/>
            <path d="M386 219Q398 202 466 196" fill="none" stroke="#e9a53a" stroke-width="2" opacity=".5"/>
            <path d="M411 235Q421 217 455 211V240z" fill="#a87423"/>
            <path d="M411 234Q422 216 457 211" fill="none" stroke="#3f713e" stroke-width="2"/>
          </g>
          <g fill="#876020" stroke="#5f4317" stroke-width=".6">
            <ellipse cx="402" cy="148" rx="5.500" ry="4.500" transform="rotate(-22 402 148)"/>
            <ellipse cx="465" cy="148" rx="5.500" ry="4.500" transform="rotate(-22 465 148)"/>
            <ellipse cx="357" cy="195" rx="5.500" ry="4.500" transform="rotate(-22 357 195)"/>
            <ellipse cx="482" cy="195" rx="5.500" ry="4.500" transform="rotate(-22 482 195)"/>
            <ellipse cx="374" cy="241" rx="5.500" ry="4.500" transform="rotate(-22 374 241)"/>
            <ellipse cx="436" cy="241" rx="5.500" ry="4.500" transform="rotate(-22 436 241)"/>
          </g>

          <!-- right flange -->
          <path d="M549 183H539a32 75.500 0 0 0 0 151h10z" fill="url(#steel)"/>
          <ellipse cx="549" cy="259" rx="29" ry="75" fill="#565b64"/>
          <ellipse cx="549" cy="259" rx="15" ry="38" fill="url(#port)"/>
          <g clip-path="url(#portclip)">
            <path d="M534 235Q546 258 541 288" fill="none" stroke="#f0bd5c" stroke-width="3" opacity=".6"/>
            <path d="M538 240Q549 260 544 286" fill="none" stroke="#94651c" stroke-width="2" opacity=".5"/>
          </g>
          <g fill="#e2a13a" stroke="#8b601d" stroke-width=".6">
            <ellipse cx="546" cy="199" rx="2" ry="4"/><ellipse cx="563" cy="212" rx="2" ry="4"/>
            <ellipse cx="530" cy="221" rx="2" ry="4"/><ellipse cx="572" cy="252" rx="2" ry="4"/>
            <ellipse cx="525" cy="266" rx="2" ry="4"/><ellipse cx="567" cy="297" rx="2" ry="4"/>
            <ellipse cx="534" cy="307" rx="2" ry="4"/><ellipse cx="552" cy="319" rx="2" ry="4"/>
            <ellipse cx="342" cy="266" rx="2" ry="4"/><ellipse cx="351" cy="307" rx="2" ry="4"/>
            <ellipse cx="368" cy="319" rx="2" ry="4"/>
          </g>

          <!-- axes -->
          <g fill="none" stroke="#5b4a55" stroke-width=".6" stroke-dasharray="6 2 2 2">
            <path d="M360 258H560M404 153l7 13M467 153l6 11M359 200l6 11M345 198h22M331 221h20M364 211h9M375 247l7 11M373 251h22M326 265h20M420 198l24 46M513 221h20M508 265h18M370 296h20M514 307h12M530 199h16"/>
          </g>
          <path d="M444 245l2 12q8 8-2 16" fill="none" stroke="#42dcb4" stroke-dasharray="4 2"/>
          <path d="M442 242h4v5h-4z" fill="#36df43"/>
          <path d="M442 256h3v3h-3zM443 272h2v2h-2z" fill="#55ecd0"/>
          <path d="M453 249h4v3h-4zM464 255h3v3h-3z" fill="#b23b25"/>
          <text x="450" y="264" class="csys-name">PRT_CSYS_DEF</text>
          <text x="500" y="204" class="note">M20x1 ISO - H TAP ↧ 28.000</text>
          <text x="500" y="211" class="note">19 DRILL ( 19.000 ) ↧ 28.000 -( 6 ) HOLES</text>
          <path d="M493 202h7" stroke="#4a2080"/>
        </svg>
        <div class="view-bar">
          <button aria-label="Refit"><svg><use href="#zoomfit"/></svg></button>
          <button aria-label="Zoom in"><svg><use href="#zoomin"/></svg></button>
          <button aria-label="Zoom out"><svg><use href="#zoomout"/></svg></button>
          <button aria-label="Repaint"><svg><use href="#repaint"/></svg></button>
          <button aria-label="Rendering options" class="drop"><svg><use href="#render"/></svg></button>
          <button aria-label="Display style" class="drop"><svg><use href="#display"/></svg></button>
          <button aria-label="Saved orientations" class="drop"><svg><use href="#views"/></svg></button>
          <button aria-label="View manager"><svg><use href="#viewmgr"/></svg></button>
          <button aria-label="Perspective view"><svg><use href="#persp"/></svg></button>
          <button aria-label="Section" class="drop"><svg><use href="#section"/></svg></button>
          <button aria-label="Datum display filters" class="drop"><svg><use href="#datums"/></svg></button>
          <button aria-label="Annotation display" class="on"><svg><use href="#notes"/></svg></button>
          <button aria-label="Spin center" class="on"><svg><use href="#spin"/></svg></button>
          <button aria-label="Simulate"><svg><use href="#warn"/></svg></button>
          <button aria-label="Pause"><svg><use href="#pause"/></svg></button>
          <button aria-label="Stop"><svg><use href="#stop"/></svg></button>
        </div>
      </section>
    </main>

    <footer class="status">
      <button class="on" aria-label="Navigator"><svg><use href="#panel"/></svg></button>
      <button aria-label="Browser"><svg><use href="#browser"/></svg></button>
      <button aria-label="Full screen"><svg><use href="#square"/></svg></button>
      <p>•&nbsp; STOPVALVEBODY regeneration completed successfully.</p>
      <div class="find">
        <button aria-label="Find"><svg><use href="#binoc"/></svg></button>
        <button class="find-more" aria-label="Find options"><i class="caret"></i></button>
      </div>
      <div class="select-box">
        <select aria-label="Selection filter"><option>Geometry</option></select>
        <i class="caret"></i>
      </div>
    </footer>

    <div class="taskbar">
      <button class="start" aria-label="Start"><svg><use href="#win"/></svg></button>
      <label class="win-search"><svg><use href="#search"/></svg><input type="text" placeholder="Type here to search" aria-label="Type here to search"></label>
      <div class="apps">
        <button class="view" aria-label="Task view"><svg><use href="#taskview"/></svg></button>
        <button aria-label="Edge"><svg><use href="#edge"/></svg></button>
        <button class="running" aria-label="File Explorer"><svg><use href="#explorer"/></svg></button>
        <button aria-label="Store"><svg><use href="#store"/></svg></button>
        <button aria-label="Mail"><svg><use href="#mail"/></svg></button>
        <button aria-label="Brave"><svg><use href="#brave"/></svg></button>
        <button aria-label="WhatsApp"><svg><use href="#whatsapp"/></svg><span class="badge">15</span></button>
        <button class="running" aria-label="Creo"><svg><use href="#creo-app"/></svg></button>
        <button class="running current" aria-label="Creo Parametric"><svg><use href="#creo-part"/></svg></button>
      </div>
      <div class="tray">
        <button class="weather"><svg><use href="#weather"/></svg><span>27°C</span><span>Mostly cloudy</span></button>
        <button aria-label="Hidden icons"><svg viewBox="0 0 16 16"><path d="M3 11l5-5 5 5" fill="none" stroke="#fff" stroke-width="1.500"/></svg></button>
        <button aria-label="Meet Now"><svg><use href="#meet"/></svg></button>
        <button aria-label="Network"><svg><use href="#globe"/></svg></button>
        <button aria-label="Volume"><svg><use href="#sound"/></svg></button>
        <button class="lang">ENG</button>
        <button class="clock">22:04<br>23-10-2024</button>
        <button class="notify" aria-label="Notifications"><svg><use href="#notice"/></svg><span class="badge">4</span></button>
      </div>
    </div>
  </div>
</body>
</html>
```

FILE: styles.css
```css
* {
  box-sizing: border-box;
}

body {
  margin: 0;
  font-family: "Open Sans", "Noto Sans", sans-serif;
  font-size: 7px;
  color: #3e4446;
  overflow: hidden;
}

button, input, select {
  font: inherit;
  color: inherit;
  background: none;
  border: none;
  padding: 0;
  margin: 0;
}

button {
  display: flex;
  align-items: center;
  white-space: nowrap;
}

a {
  color: inherit;
  text-decoration: none;
}

svg {
  width: 10px;
  height: 10px;
  flex: none;
}

.sprite {
  position: absolute;
  width: 0;
  height: 0;
}

.caret {
  flex: none;
  border: 2px solid transparent;
  border-top: 3px solid #4a5052;
  border-bottom: 0;
}

.caret.dim {
  border-top-color: #a8adaf;
}

.caret.light {
  border-top-color: #fff;
}

.app {
  height: 100vh;
  display: flex;
  flex-direction: column;
}

/* title bar */
.titlebar {
  height: 16px;
  background: #d9dede;
  display: grid;
  grid-template-columns: 1fr auto 1fr;
  align-items: center;
}

.quick {
  display: flex;
  align-items: center;
  gap: 4px;
  padding-left: 5px;
}

.quick button {
  gap: 3px;
}

.quick .logo {
  width: 9px;
}

.brand {
  font: 11px/16px Lato, sans-serif;
  color: #41484b;
  width: 32px;
  margin-left: -2px;
}

.brand sup {
  font-size: 5px;
  vertical-align: top;
}

.quick .more {
  border-left: 1px solid #b9c0c1;
  padding-left: 5px;
  height: 10px;
}

.doc-title {
  font-family: "Noto Sans", sans-serif;
  color: #4f5557;
}

.win-buttons {
  display: flex;
  justify-content: flex-end;
  gap: 8px;
  padding-right: 6px;
}

.win-buttons svg,
.tab-tools svg {
  width: 8px;
  height: 8px;
}

/* ribbon tabs */
.tabs {
  height: 16px;
  background: #3c4547;
  color: #fff;
  display: flex;
  font-family: "Noto Sans", sans-serif;
  line-height: 17px;
}

.tabs a {
  padding: 0 14px;
}

.tabs .file {
  padding: 0 12px;
  background: #5db533;
}

.tabs .active {
  background: #fafbfd;
  color: #459b35;
}

.tab-tools {
  display: flex;
  align-items: center;
  gap: 6px;
  margin-left: auto;
  padding-right: 5px;
  font-weight: bold;
}

/* ribbon */
.ribbon {
  height: 63px;
  background: #fafbfd;
  border-bottom: 1px solid #cbd0d2;
  display: flex;
}

.group {
  border-right: 1px solid #d3d7d9;
  display: flex;
  flex-direction: column;
  justify-content: space-between;
  padding-left: 4px;
}

.tools {
  display: flex;
}

.col {
  display: flex;
  flex-direction: column;
}

.col button {
  height: 16px;
  gap: 2px;
}

.col .caret {
  margin-left: 3px;
}

.col button:disabled {
  color: #b3b7b9;
}

.big {
  flex-direction: column;
  width: 34px;
  padding-top: 3px;
  line-height: 9px;
}

.big svg {
  width: 18px;
  height: 18px;
  margin-bottom: 6px;
}

.big .caret {
  margin-top: 2px;
}

.group-name {
  height: 14px;
  align-self: center;
  gap: 3px;
  margin-left: -4px;
}

.g-ops { width: 66px; }
.g-ops .col { padding-left: 5px; }
.g-data { width: 39px; }
.g-data .col { padding-left: 11px; }
.g-body { width: 29px; }
.g-body .col { padding-left: 5px; }
.g-datum { width: 127px; padding-left: 0; }
.g-datum .big { width: 26px; }
.g-datum .col { width: 73px; }
.g-shapes { width: 87px; padding-left: 0; }
.g-shapes .big { width: 33px; }
.g-eng { width: 96px; }
.g-eng .col { width: 51px; }
.g-edit { width: 210px; padding-left: 0; }
.g-edit .big { width: 31px; }
.g-edit .col { width: 37px; }
.g-edit .col:nth-child(3) { width: 41px; }
.g-edit .col:nth-child(4) { width: 41px; }
.g-edit .col:nth-child(5) { width: auto; }
.g-surf { width: 53px; padding-left: 2px; }
.g-surf .col { padding-left: 3px; }
.g-intent { width: 53px; padding-left: 0; }
.g-intent .big { width: 52px; }
.g-intent .group-name { margin-left: 0; }

/* work area */
.work {
  flex: 1;
  min-height: 0;
  display: flex;
  background: #e3e6e8;
}

.side {
  width: 93px;
  background: #f8fbfb;
  border-right: 1px solid #d3d8da;
  margin-bottom: 5px;
  display: flex;
  flex-direction: column;
}

.side-tabs {
  display: flex;
  height: 15px;
  background: #d6dbdc;
}

.side-tabs button {
  width: 19px;
  justify-content: center;
}

.side-tabs .on {
  background: #f8fbfb;
}

.side-tools {
  display: flex;
  align-items: center;
  gap: 6px;
  height: 19px;
  padding: 0 5px 0 6px;
}

.side-tools .push {
  margin-left: auto;
  font-size: 9px;
}

.grip {
  height: 9px;
  border-left: 1px dotted #aaa;
  margin-right: 3px;
}

.side-filter {
  display: flex;
  align-items: center;
  gap: 4px;
  height: 16px;
  padding: 0 6px;
}

.filter-box {
  flex: 1;
  min-width: 0;
  display: flex;
  border: 1px solid #b9bec0;
  background: #fff;
  height: 16px;
}

.filter-box input {
  flex: 1;
  min-width: 0;
}

.filter-box button {
  padding-right: 3px;
  color: #8c9193;
  font-size: 8px;
}

.plus {
  font-size: 12px;
  line-height: 12px;
  color: #777d80;
}

.tree-wrap {
  flex: 1;
  min-height: 0;
  display: flex;
  overflow: hidden;
  margin: 2px 4px 0 6px;
}

.tree {
  list-style: none;
  flex: 1;
  min-width: 0;
  margin: 0 0 -6px;
  padding: 0;
  display: flex;
  flex-direction: column;
  font-family: Roboto, "Open Sans", sans-serif;
}

.tree li {
  flex: 1;
  min-height: 0;
  display: flex;
  align-items: center;
  gap: 3px;
  padding-left: 12px;
  white-space: nowrap;
  line-height: 10px;
}

.tree li svg {
  width: 9px;
  height: 9px;
}

.tree .root {
  padding-left: 0;
  gap: 2px;
}

.tree .hid {
  color: #b3ad9b;
}

.tree .more {
  padding-left: 4px;
}

.tree .more::before {
  content: "";
  border: 2px solid transparent;
  border-left: 5px solid #6d7375;
  border-right: 0;
}

.vbar {
  width: 8px;
  background: #e3e6e8;
  display: flex;
  flex-direction: column;
  align-items: stretch;
}

.vbar i,
.hbar i {
  flex: none;
  width: 8px;
  height: 8px;
  background: #fafafa;
  border: 1px solid #d0d4d6;
  display: flex;
  align-items: center;
  justify-content: center;
}

.vbar i::before,
.hbar i::before {
  content: "";
  border: 2px solid transparent;
}

.vbar .up::before { border-bottom-color: #777; border-top: 0; }
.vbar .down::before { border-top-color: #777; border-bottom: 0; }
.hbar .left::before { border-right-color: #777; border-left: 0; }
.hbar .right::before { border-left-color: #777; border-right: 0; }

.vbar b {
  height: 50%;
  background: #fafbfb;
  border: 1px solid #cfd3d5;
}

.vbar .down {
  margin-top: auto;
}

.hbar {
  display: flex;
  height: 8px;
  margin: 0 12px 1px 6px;
  background: #d5d9db;
}

.hbar b {
  flex: 1;
  background: #fafbfb;
  border: 1px solid #cfd3d5;
  margin-right: 8px;
}

.canvas {
  flex: 1;
  min-width: 0;
  background: #e8eaee;
  display: grid;
  justify-items: center;
  align-items: start;
}

.model {
  grid-area: 1 / 1;
  width: 100%;
  height: 100%;
}

.note {
  font: 7px Roboto, "Liberation Sans", sans-serif;
  fill: #4a2080;
}

.csys-name {
  font: italic 7px "Liberation Sans", sans-serif;
  fill: #7c5342;
}

.view-bar {
  grid-area: 1 / 1;
  width: 248px;
  height: 19px;
  margin-top: 3px;
  padding: 0 2px;
  background: #f9fafb;
  border: 1px solid #c2c7ca;
  display: flex;
  align-items: center;
  justify-content: space-between;
}

.view-bar button {
  width: 14px;
  height: 15px;
  justify-content: center;
  position: relative;
}

.view-bar .on {
  background: #dfe3e5;
  border: 1px solid #b5bbbe;
}

.view-bar .drop::after {
  content: "";
  position: absolute;
  right: 0;
  bottom: 1px;
  border: 1px solid #4a5052;
  border-top-color: transparent;
  border-left-color: transparent;
}

/* status bar */
.status {
  height: 18px;
  background: #f8fbfc;
  display: flex;
  align-items: center;
  gap: 2px;
  padding: 0 11px 0 3px;
}

.status > button {
  width: 13px;
  height: 13px;
  justify-content: center;
}

.status .on {
  background: #e1e5e7;
  border: 1px solid #b5bbbe;
}

.status p {
  flex: 1;
  margin: 0 0 0 4px;
  padding-left: 3px;
  border-left: 1px solid #ccd1d3;
  font-size: 6px;
  line-height: 14px;
  font-family: "Noto Sans", sans-serif;
}

.find {
  display: flex;
  align-items: center;
  height: 14px;
  padding-left: 4px;
  border: 1px solid #d3d7d9;
  margin-right: 52px;
}

.find-more {
  height: 12px;
  padding: 0 3px;
  margin-left: 3px;
  border-left: 1px solid #d3d7d9;
}

.select-box {
  width: 97px;
  height: 14px;
  border: 1px solid #c3c8ca;
  background: #fff;
  display: flex;
  align-items: center;
  padding-right: 2px;
}

.select-box select {
  flex: 1;
  appearance: none;
  padding-left: 4px;
  height: 12px;
  border-right: 1px solid #c3c8ca;
  margin-right: 2px;
}

/* windows taskbar */
.taskbar {
  height: 24px;
  background: linear-gradient(90deg, #203540, #20343f 60%, #182a43 75%, #18283f);
  color: #fff;
  display: flex;
}

.start {
  width: 28px;
  justify-content: center;
}

.win-search {
  width: 169px;
  background: #f1f2f2;
  color: #444;
  display: flex;
  align-items: center;
  gap: 7px;
  padding-left: 7px;
}

.win-search input {
  flex: 1;
  min-width: 0;
  font-size: 8px;
}

.win-search input::placeholder {
  color: #555;
  opacity: 1;
}

.apps {
  display: flex;
  gap: 1px;
}

.apps button {
  width: 28px;
  justify-content: center;
  position: relative;
  border-bottom: 1px solid transparent;
}

.apps svg {
  width: 15px;
  height: 15px;
}

.apps .view svg {
  width: 11px;
  height: 11px;
}

.apps .running {
  border-bottom-color: #7bb9e8;
}

.apps .current {
  background: #47606d;
}

.badge {
  position: absolute;
  right: 0;
  bottom: 2px;
  min-width: 10px;
  height: 10px;
  border: 1px solid #929ba2;
  border-radius: 5px;
  background: #303c46;
  color: #fff;
  font-size: 6px;
  line-height: 8px;
  text-align: center;
}

.tray {
  margin-left: auto;
  display: flex;
  align-items: center;
  gap: 4px;
  padding-right: 9px;
}

.tray .weather {
  gap: 5px;
  font-size: 8px;
  margin-right: 8px;
}

.weather svg {
  width: 15px;
  height: 15px;
}

.tray .lang {
  margin-left: 2px;
}

.tray .clock {
  width: 42px;
  justify-content: center;
  line-height: 11px;
}

.tray .notify {
  position: relative;
  width: 16px;
  height: 20px;
}
```
